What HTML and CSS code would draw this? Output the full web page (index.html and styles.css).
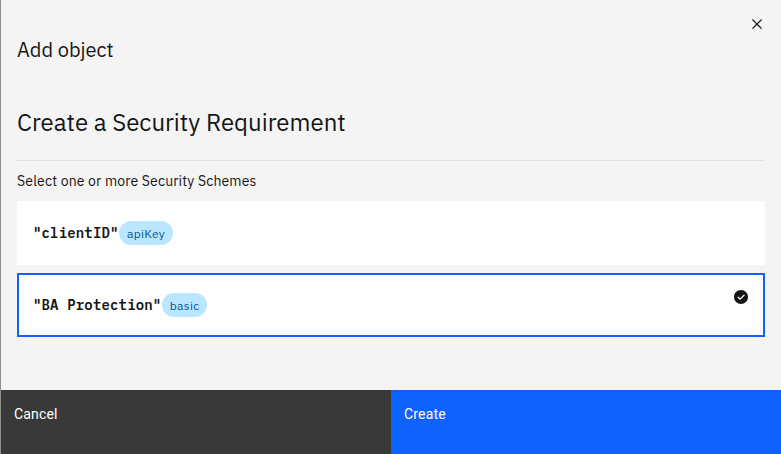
FILE: index.html
```html
<!DOCTYPE html>
<html lang="en">
<head>
<meta charset="utf-8">
<title>Add object</title>
<link rel="stylesheet" href="styles.css">
</head>
<body>
<div class="modal">
  <header class="modal-header">
    <h2 class="modal-title">Add object</h2>
    <button class="close" aria-label="Close">
      <svg width="20" height="20" viewBox="0 0 32 32"><path d="M24 9.4 22.6 8 16 14.6 9.4 8 8 9.4 14.6 16 8 22.6 9.4 24 16 17.4 22.6 24 24 22.6 17.4 16z"/></svg>
    </button>
  </header>
  <main class="modal-body">
    <h3 class="heading">Create a Security Requirement</h3>
    <p class="hint">Select one or more Security Schemes</p>
    <div class="tiles">
      <div class="tile">
        <span class="name">"clientID"</span><span class="tag tag-key">apiKey</span>
      </div>
      <div class="tile selected">
        <span class="name">"BA Protection"</span><span class="tag tag-basic">basic</span>
        <svg class="check" width="16" height="16" viewBox="0 0 16 16"><path d="M8 1C4.1 1 1 4.1 1 8s3.1 7 7 7 7-3.1 7-7-3.1-7-7-7zM7 11 4.3 8.3l.9-.8L7 9.3l4-3.9.9.8L7 11z"/></svg>
      </div>
    </div>
  </main>
  <footer class="actions">
    <button class="btn cancel">Cancel</button>
    <button class="btn create">Create</button>
  </footer>
</div>
</body>
</html>
```

FILE: styles.css
```css
* { box-sizing: border-box; }
body {
  margin: 0;
  color: #161616;
  font-family: "IBM Plex Sans", Roboto, "Liberation Sans", sans-serif;
}
h2, h3, p { margin: 0; font-weight: 400; }
button { border: 0; font: inherit; }
.modal {
  display: flex;
  flex-direction: column;
  height: 454px;
  background: #f4f4f4;
  border-left: 1px solid #8d8d8d;
}
.modal-header {
  display: flex;
  justify-content: space-between;
  height: 92px;
  padding-left: 16px;
}
.modal-title {
  padding-top: 36px;
  font-size: 20px;
  line-height: 28px;
}
.close {
  display: flex;
  align-items: center;
  justify-content: center;
  width: 48px;
  height: 48px;
  padding: 0;
  background: transparent;
}
.close svg { fill: #161616; }
.modal-body {
  flex: 1;
  padding: 0 16px;
}
.heading {
  height: 69px;
  padding-top: 14px;
  border-bottom: 1px solid #e0e0e0;
  font-size: 24px;
  line-height: 32px;
}
.hint {
  padding: 11px 0;
  font-size: 14px;
  line-height: 18px;
  letter-spacing: 0.16px;
}
.tiles {
  display: grid;
  gap: 8px;
}
.tile {
  position: relative;
  display: flex;
  align-items: center;
  height: 64px;
  padding-left: 16px;
  background: #fff;
}
.selected {
  padding-left: 14px;
  border: 2px solid #0f62fe;
}
.name {
  margin-right: 0.4px;
  font: 600 14px/18px "IBM Plex Mono", "Liberation Mono", monospace;
  letter-spacing: 0.16px;
}
.tag {
  height: 24px;
  padding: 0 8px;
  border-radius: 12px;
  background: #bae6ff;
  color: #00539a;
  font-size: 12px;
  line-height: 25px;
  letter-spacing: 0.32px;
}
.tag-key { width: 54px; }
.tag-basic { width: 45px; }
.check {
  position: absolute;
  top: 14px;
  right: 14px;
  fill: #161616;
}
.actions {
  display: flex;
  height: 64px;
}
.btn {
  flex: 1;
  padding: 15px 13px;
  color: #fff;
  font-family: Roboto, sans-serif;
  font-size: 14px;
  font-weight: 450;
  line-height: 18px;
  letter-spacing: 0.16px;
  text-align: left;
  display: flex;
}
.cancel { background: #393939; }
.create { background: #0f62fe; }
```
